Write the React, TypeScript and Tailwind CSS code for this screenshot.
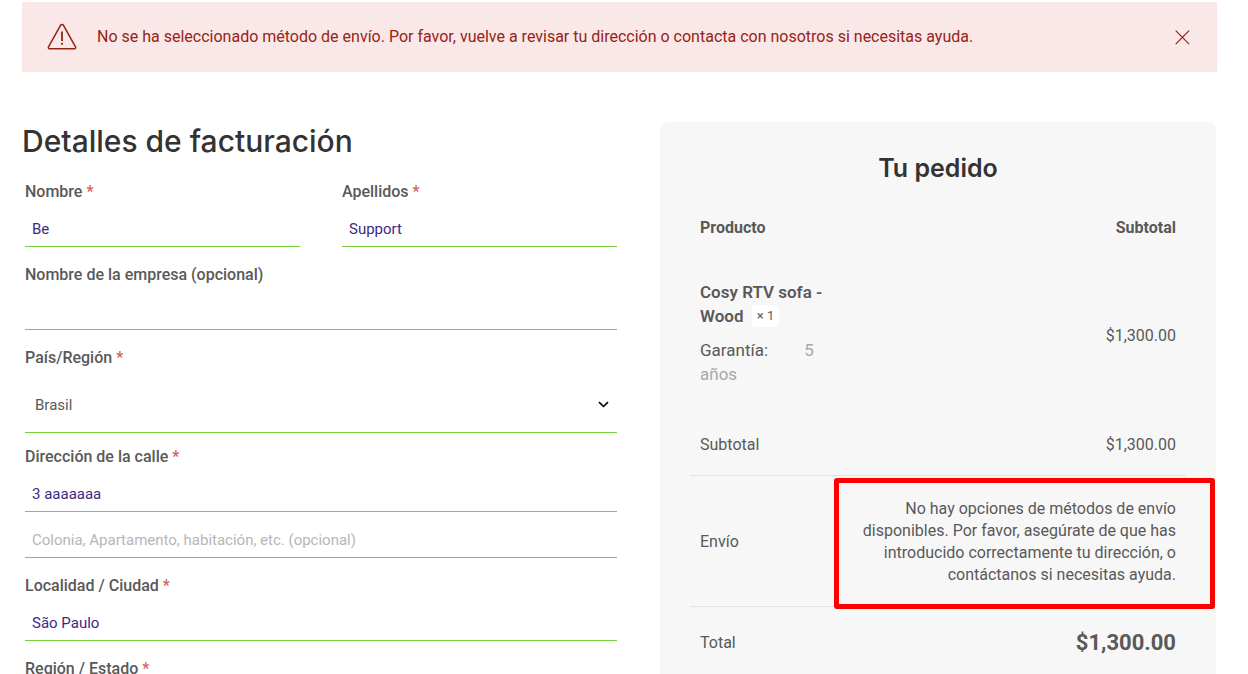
import { useState } from 'react';
import type { ReactNode } from 'react';

interface FieldProps {
  id: string;
  label: string;
  required?: boolean;
  children: ReactNode;
}

const INPUT =
  'block w-full h-9 px-[7px] border-b border-[#73d13d] bg-transparent text-[15px] text-[#3b2a82] placeholder:text-[#b3b7ba] outline-none';

function Field({ id, label, required, children }: FieldProps) {
  return (
    <div>
      <label htmlFor={id} className="block mb-[7px] font-medium leading-6">
        {label}
        {required && <span className="text-[#d45d5d]"> *</span>}
      </label>
      {children}
    </div>
  );
}

function ErrorNotice({ onClose }: { onClose: () => void }) {
  return (
    <div
      role="alert"
      className="flex items-center bg-[#fae8e8] text-[#982314] min-h-[70px] pl-[25px] pr-[27px]"
    >
      <svg
        className="shrink-0 mr-5"
        width="30"
        height="28"
        viewBox="0 0 30 28"
        fill="none"
        stroke="currentColor"
        strokeWidth="1.5"
        strokeLinejoin="round"
      >
        <path d="M13.5 2.4a1.7 1.7 0 0 1 3 0l12 21.5c.5.9-.1 1.8-1 1.8h-25c-.9 0-1.5-.9-1-1.8z" />
        <path d="M15 8.5v9.4M15 19.8v2" strokeWidth="1.8" />
      </svg>
      <p className="flex-1 leading-6">
        No se ha seleccionado método de envío. Por favor, vuelve a revisar tu dirección o contacta
        con nosotros si necesitas ayuda.
      </p>
      <button type="button" aria-label="Cerrar" onClick={onClose} className="cursor-pointer">
        <svg width="16" height="16" viewBox="0 0 16 16" stroke="currentColor" strokeWidth="1.2">
          <path d="M1.7 1.7l13.4 13.4M15.1 1.7L1.7 15.1" />
        </svg>
      </button>
    </div>
  );
}

function BillingForm() {
  return (
    <form onSubmit={(e) => e.preventDefault()}>
      <h2 className="font-[Inter,sans-serif] text-[30px] font-medium leading-[38px] text-[#333] whitespace-nowrap mb-5">
        Detalles de facturación
      </h2>
      <div className="px-[3px] space-y-4">
        <div className="grid grid-cols-2 gap-[42px]">
          <Field id="first-name" label="Nombre" required>
            <input id="first-name" className={INPUT} defaultValue="Be" />
          </Field>
          <Field id="last-name" label="Apellidos" required>
            <input id="last-name" className={INPUT} defaultValue="Support" />
          </Field>
        </div>

        <Field id="company" label="Nombre de la empresa (opcional)">
          <input id="company" className={INPUT} />
        </Field>

        <div className="space-y-3">
          <Field id="country" label="País/Región" required>
            <div className="relative">
              <select
                id="country"
                className="block w-full h-14 px-[10px] pt-0.5 border-b border-[#73d13d] bg-transparent appearance-none text-[15px] outline-none"
              >
                <option>Brasil</option>
              </select>
              <svg
                className="absolute right-2 top-[22px] pointer-events-none"
                width="11"
                height="11"
                viewBox="0 0 11 11"
                fill="none"
                stroke="#000"
                strokeWidth="1.6"
              >
                <path d="M1 3.2l4.5 4.3L10 3.2" />
              </svg>
            </div>
          </Field>

          <Field id="address-1" label="Dirección de la calle" required>
            <input id="address-1" className={INPUT} defaultValue="3 aaaaaaa" />
            <input
              id="address-2"
              aria-label="Colonia, Apartamento, habitación, etc. (opcional)"
              className={`${INPUT} mt-[10px]`}
              placeholder="Colonia, Apartamento, habitación, etc. (opcional)"
            />
          </Field>
        </div>

        <Field id="city" label="Localidad / Ciudad" required>
          <input id="city" className={INPUT} defaultValue="São Paulo" />
        </Field>

        <Field id="state" label="Región / Estado" required>
          <input id="state" className={INPUT} />
        </Field>
      </div>
    </form>
  );
}

function OrderSummary() {
  return (
    <section className="bg-[#f7f7f7] rounded-lg px-[30px] pt-7">
      <h3 className="font-[Inter,sans-serif] text-[25px] font-semibold leading-9 text-[#333] text-center mb-[11px]">
        Tu pedido
      </h3>
      <table className="w-full table-fixed border-separate border-spacing-0">
        <thead>
          <tr className="h-[60px]">
            <th className="w-[30%] px-[10px] pt-0.5 text-left font-bold">Producto</th>
            <th className="px-[10px] pt-0.5 text-right font-bold">Subtotal</th>
          </tr>
        </thead>
        <tbody>
          <tr className="h-[156px]">
            <td className="px-[10px] text-[17px] leading-6">
              <div className="font-semibold">
                Cosy RTV sofa - Wood{' '}
                <span className="inline-block align-top mt-px rounded bg-white ml-1 px-[5px] text-[13px] font-normal leading-[22px]">
                  × 1
                </span>
              </div>
              <dl className="mt-[10px] mb-[5px]">
                <dt className="inline mr-8">Garantía:</dt>{' '}
                <dd className="inline text-[#a8a8a8]">5 años</dd>
              </dl>
            </td>
            <td className="px-[10px] pt-0.5 text-right">$1,300.00</td>
          </tr>
        </tbody>
        <tfoot>
          <tr className="h-[63px]">
            <th className="px-[10px] pt-0.5 text-left font-normal border-b border-[#e2e2e2]">
              Subtotal
            </th>
            <td className="px-[10px] pt-0.5 text-right border-b border-[#e2e2e2]">$1,300.00</td>
          </tr>
          <tr className="h-[131px]">
            <th className="px-[10px] pt-0.5 text-left font-normal border-b border-[#e2e2e2]">
              Envío
            </th>
            <td className="relative px-[10px] pt-0.5 text-right leading-[22px] border-b border-[#e2e2e2]">
              No hay opciones de métodos de envío disponibles. Por favor, asegúrate de que has
              introducido correctamente tu dirección, o contáctanos si necesitas ayuda.
              <div className="absolute top-[2px] -bottom-[3px] -left-[5px] -right-[29px] border-5 border-[#ff0000] rounded-[3px] pointer-events-none" />
            </td>
          </tr>
          <tr className="h-[70px]">
            <th className="px-[10px] pt-0.5 text-left font-normal">Total</th>
            <td className="px-[10px] text-right text-[22px] font-bold">$1,300.00</td>
          </tr>
        </tfoot>
      </table>
    </section>
  );
}

export default function App() {
  const [showNotice, setShowNotice] = useState(true);

  return (
    <div className="min-h-screen bg-white pt-0.5 pl-[22px] pr-[31px] font-[Roboto,sans-serif] text-base text-[#595959]">
      {showNotice && <ErrorNotice onClose={() => setShowNotice(false)} />}
      <main className="mt-[50px] pr-px grid grid-cols-[minmax(0,598fr)_minmax(0,556fr)] gap-10">
        <BillingForm />
        <OrderSummary />
      </main>
    </div>
  );
}
